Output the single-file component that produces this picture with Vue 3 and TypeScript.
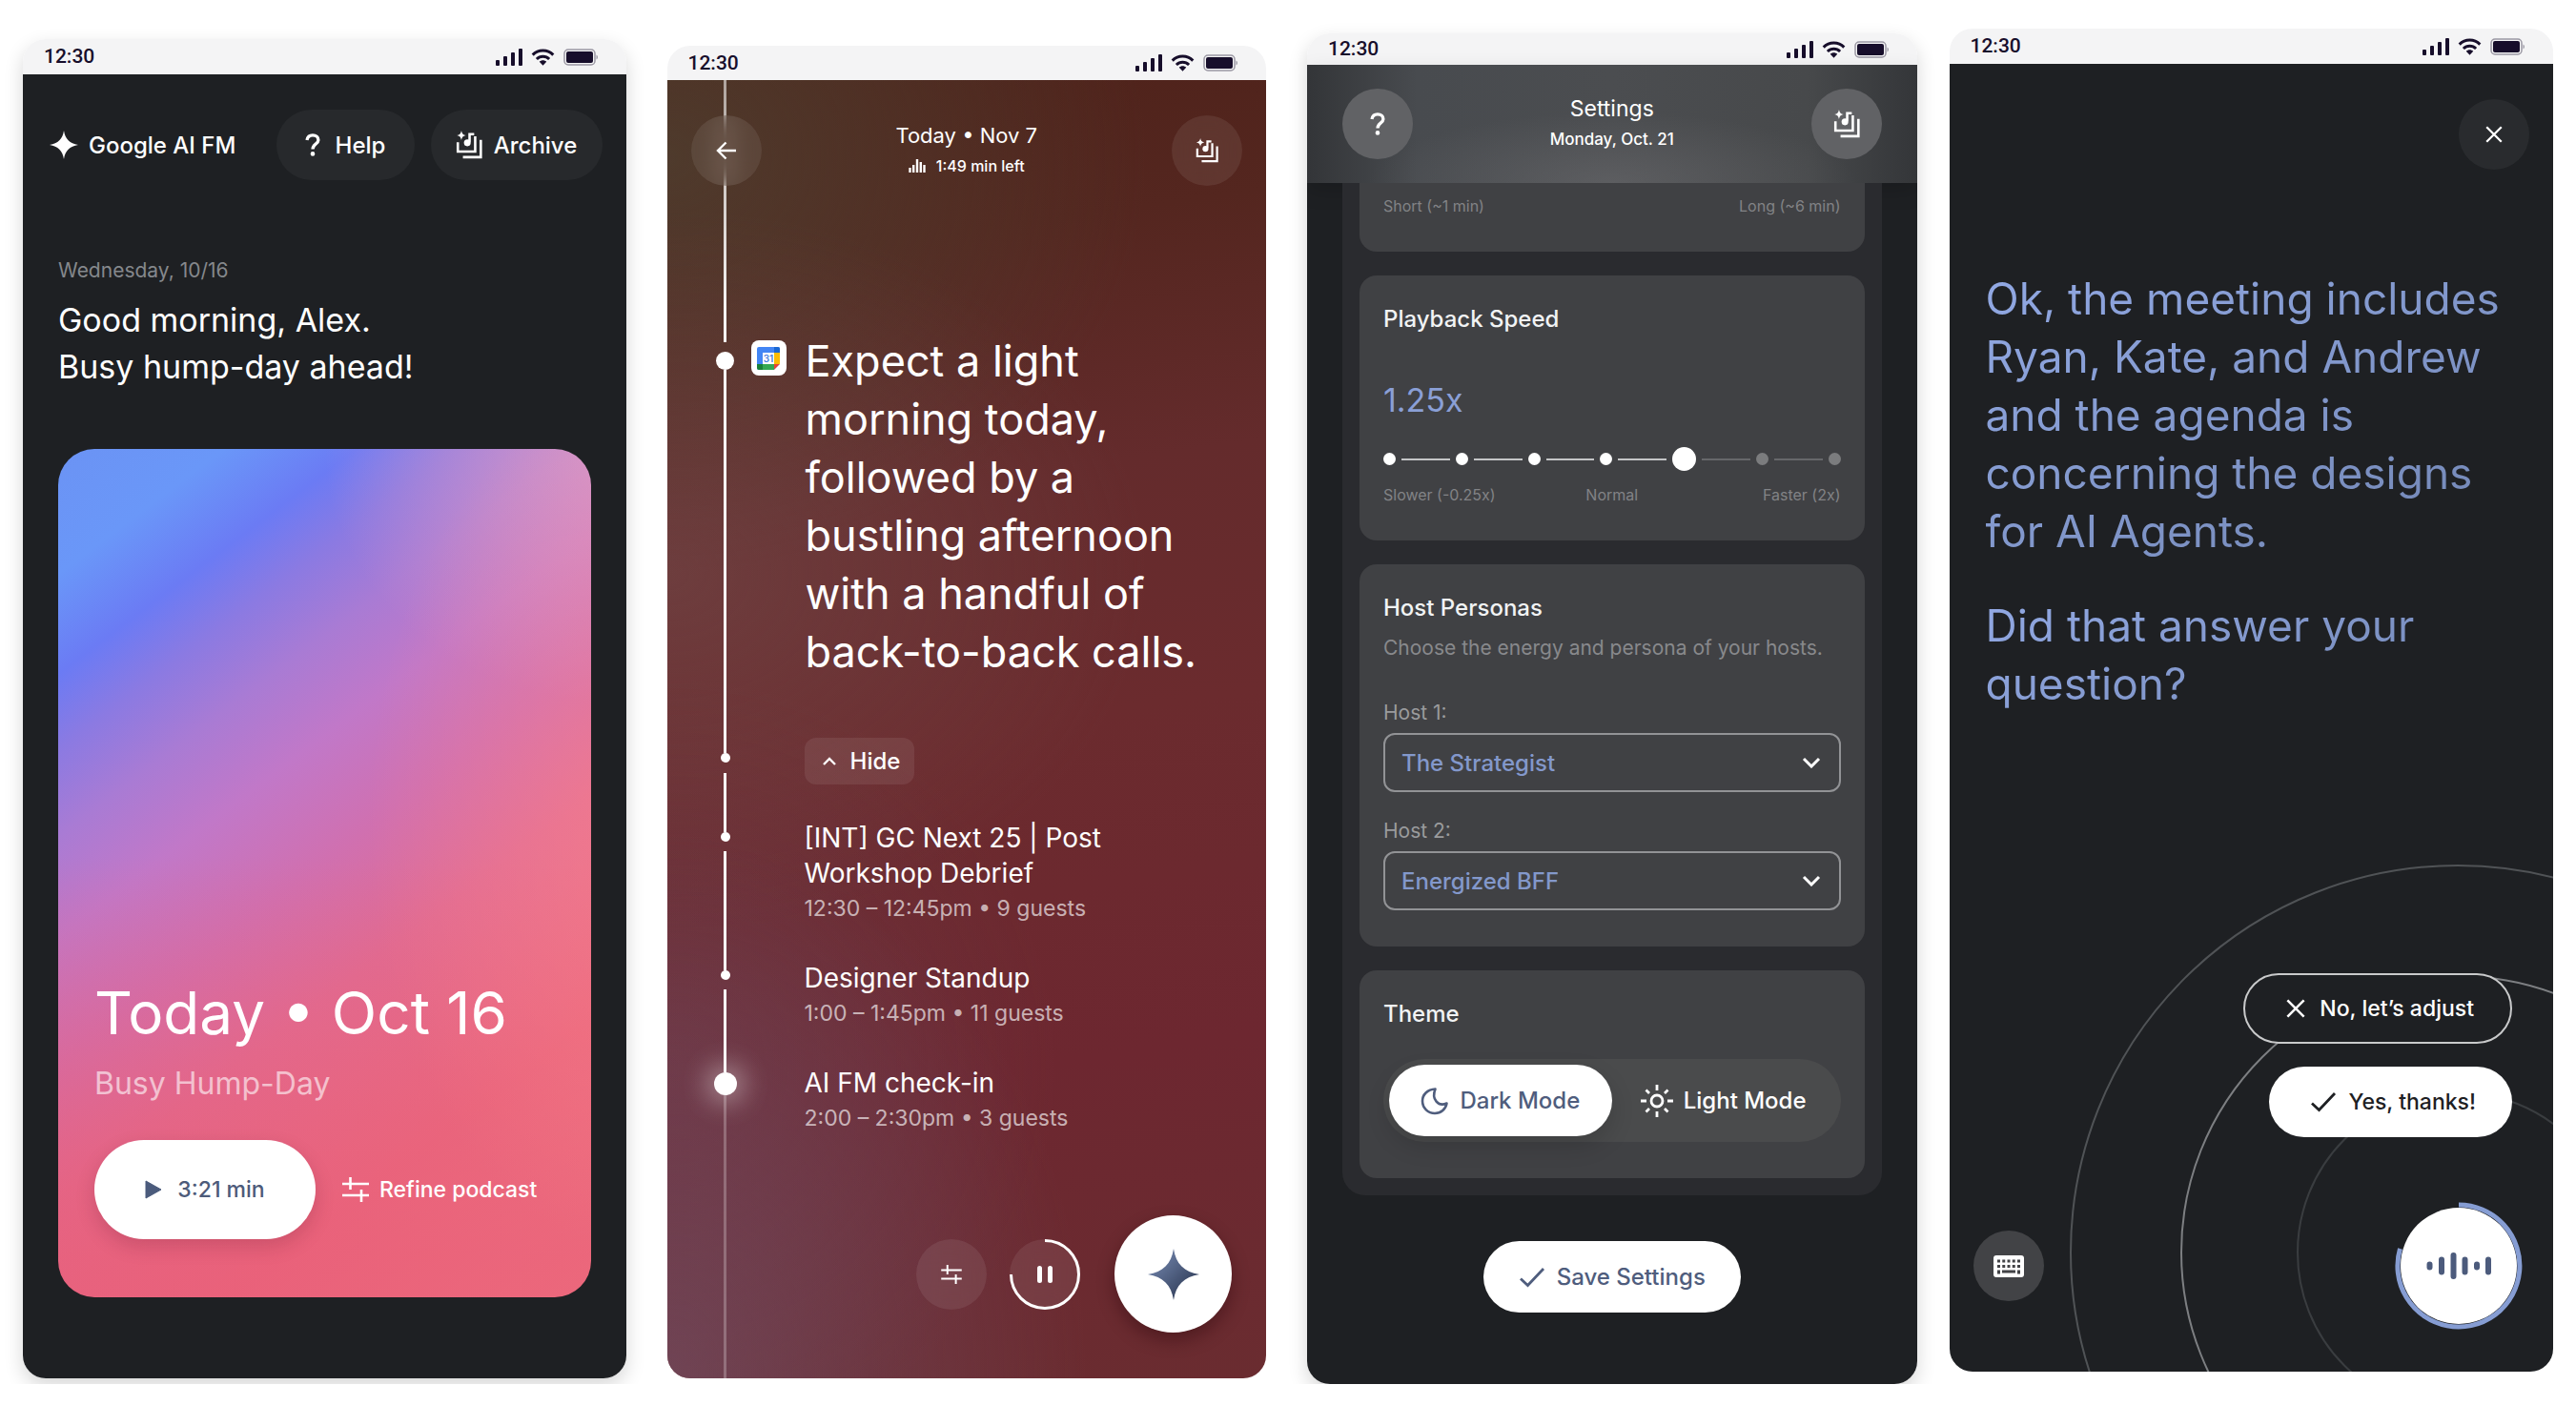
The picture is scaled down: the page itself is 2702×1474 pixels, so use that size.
<script setup lang="ts">
import { ref } from 'vue'

interface CalendarEvent {
  title: string[]
  meta: string
}

const summary: string[] = [
  'Expect a light',
  'morning today,',
  'followed by a',
  'bustling afternoon',
  'with a handful of',
  'back-to-back calls.',
]

const events: CalendarEvent[] = [
  { title: ['[INT] GC Next 25 | Post', 'Workshop Debrief'], meta: '12:30 – 12:45pm • 9 guests' },
  { title: ['Designer Standup'], meta: '1:00 – 1:45pm • 11 guests' },
  { title: ['AI FM check-in'], meta: '2:00 – 2:30pm • 3 guests' },
]

const answer: string[][] = [
  [
    'Ok, the meeting includes',
    'Ryan, Kate, and Andrew',
    'and the agenda is',
    'concerning the designs',
    'for AI Agents.',
  ],
  ['Did that answer your', 'question?'],
]

const speedSteps: number[] = [0, 1, 2, 3, 4, 5, 6]
const speedLabels: string[] = ['0.25x', '0.5x', '0.75x', '1x', '1.25x', '1.5x', '2x']
const speed = ref(4)

const personas: string[] = ['The Strategist', 'Energized BFF']
const hostOne = ref('The Strategist')
const hostTwo = ref('Energized BFF')
const theme = ref<'dark' | 'light'>('dark')
</script>

<template>
  <svg class="sprite" aria-hidden="true">
    <symbol id="i-signal" viewBox="0 0 28 18">
      <rect x="0" y="12" width="4" height="6" rx="1" />
      <rect x="8" y="8" width="4" height="10" rx="1" />
      <rect x="16" y="4" width="4" height="14" rx="1" />
      <rect x="24" y="0" width="4" height="18" rx="1" />
    </symbol>
    <symbol id="i-wifi" viewBox="0 0 24 18">
      <g fill="none" stroke="currentColor" stroke-width="3">
        <path d="M1.200 6.600C7.200 .4 16.800 .4 22.800 6.600" />
        <path d="M5.400 11C9.200 7.200 14.800 7.200 18.600 11" />
      </g>
      <path d="M8.300 13.700C10.400 11.700 13.600 11.700 15.700 13.700L12 17.800Z" />
    </symbol>
    <symbol id="i-battery" viewBox="0 0 37 18">
      <rect x="1" y="1" width="32" height="16" rx="4" fill="none" stroke="currentColor" stroke-width="1.5" opacity=".4" />
      <rect x="3" y="3" width="28" height="12" rx="2" />
      <path d="M34.500 6.500C36.500 7.500 36.500 10.500 34.500 11.500Z" opacity=".4" />
    </symbol>
    <symbol id="i-star" viewBox="0 0 32 32">
      <path d="M16 0C17.500 9.500 22.500 14.500 32 16C22.500 17.500 17.500 22.500 16 32C14.500 22.500 9.500 17.500 0 16C9.500 14.500 14.500 9.500 16 0Z" />
    </symbol>
    <symbol id="i-archive" viewBox="0 0 26 28">
      <path d="M5.500 0C6.100 3 7 4 10 4.700C7 5.400 6.100 6.400 5.500 9.400C4.900 6.400 4 5.400 1 4.700C4 4 4.900 3 5.500 0Z" />
      <g fill="none" stroke="currentColor" stroke-width="2.400">
        <path d="M2 11.500V20.500H19V5.500" />
        <path d="M7 26H24.500V9" />
        <path d="M13.500 11V3.500H18" />
      </g>
      <circle cx="11.300" cy="12" r="3.300" />
    </symbol>
    <symbol id="i-help" viewBox="0 0 16 24">
      <path d="M2 7C2.600 3.600 5 1.900 8 1.900C11.600 1.900 13.900 4 13.900 7C13.900 11 8 11.300 8 16.500" fill="none" stroke="currentColor" stroke-width="3.300" />
      <circle cx="8" cy="21.400" r="2.300" />
    </symbol>
    <symbol id="i-tune" viewBox="0 0 28 26">
      <path d="M0 7H28M8.500 0V13M0 19H28M20 13V26" fill="none" stroke="currentColor" stroke-width="2.600" />
    </symbol>
    <symbol id="i-check" viewBox="0 0 28 22">
      <path d="M2 12.500L9.500 19.500L26 2" fill="none" stroke="currentColor" stroke-width="2.800" />
    </symbol>
    <symbol id="i-cross" viewBox="0 0 22 22">
      <path d="M1.500 1.500L20.500 20.500M20.500 1.500L1.500 20.500" fill="none" stroke="currentColor" stroke-width="2.800" />
    </symbol>
  </svg>

  <main class="board">
    <!-- Home -->
    <section class="phone phone-home">
      <div class="status">
        <span>12:30</span>
        <div class="status-icons">
          <svg width="28" height="18"><use href="#i-signal" /></svg>
          <svg width="25" height="18"><use href="#i-wifi" /></svg>
          <svg width="37" height="18"><use href="#i-battery" /></svg>
        </div>
      </div>
      <div class="screen home">
        <header class="home-bar">
          <div class="brand">
            <svg width="30" height="32"><use href="#i-star" /></svg>
            <span>Google AI FM</span>
          </div>
          <button class="chip chip-help" type="button">
            <svg width="16" height="24"><use href="#i-help" /></svg>
            <span>Help</span>
          </button>
          <button class="chip chip-archive" type="button">
            <svg width="28" height="30"><use href="#i-archive" /></svg>
            <span>Archive</span>
          </button>
        </header>
        <p class="date">Wednesday, 10/16</p>
        <h1 class="greeting">Good morning, Alex.<br />Busy hump-day ahead!</h1>
        <article class="card">
          <h2>Today • Oct 16</h2>
          <p>Busy Hump-Day</p>
          <div class="card-actions">
            <button class="play" type="button">
              <svg width="18" height="20" viewBox="0 0 18 20"><path d="M1 1V19L17 10Z" fill="#4b5b7c" stroke="#4b5b7c" stroke-linejoin="round" /></svg>
              <span>3:21 min</span>
            </button>
            <button class="refine" type="button">
              <svg width="28" height="26"><use href="#i-tune" /></svg>
              <span>Refine podcast</span>
            </button>
          </div>
        </article>
      </div>
    </section>

    <!-- Player -->
    <section class="phone phone-player">
      <div class="status">
        <span>12:30</span>
        <div class="status-icons">
          <svg width="28" height="18"><use href="#i-signal" /></svg>
          <svg width="25" height="18"><use href="#i-wifi" /></svg>
          <svg width="37" height="18"><use href="#i-battery" /></svg>
        </div>
      </div>
      <div class="screen player">
        <div class="rail" aria-hidden="true">
          <i class="seg seg-lead"></i>
          <i class="dot dot-mid"></i>
          <i class="seg seg-long"></i>
          <i class="dot"></i>
          <i class="seg seg-a"></i>
          <i class="dot"></i>
          <i class="seg seg-b"></i>
          <i class="dot"></i>
          <i class="seg seg-c"></i>
          <i class="dot dot-now"></i>
          <i class="seg seg-rest"></i>
        </div>
        <header class="player-bar">
          <button class="round glass" type="button" aria-label="Back">
            <svg width="22" height="20" viewBox="0 0 22 20"><path d="M21 10H2M10.500 1.500L2 10L10.500 18.500" fill="none" stroke="currentColor" stroke-width="2.400" /></svg>
          </button>
          <div class="bar-title">
            <h2>Today • Nov 7</h2>
            <p>
              <svg width="18" height="14" viewBox="0 0 18 14"><path d="M1.500 14V9M5.200 14V6M9 14V0M12.800 14V3M16.500 14V6" fill="none" stroke="currentColor" stroke-width="2.400" /></svg>
              <span>1:49 min left</span>
            </p>
          </div>
          <button class="round glass" type="button" aria-label="Archive">
            <svg width="24" height="26"><use href="#i-archive" /></svg>
          </button>
        </header>
        <div class="summary">
          <div class="calendar">
            <svg width="24" height="24" viewBox="0 0 24 24">
              <rect width="24" height="24" rx="2" fill="#4285f4" />
              <path d="M18 0H22A2 2 0 0 1 24 2V6H18Z" fill="#1967d2" />
              <path d="M18 6H24V18H18Z" fill="#fbbc04" />
              <path d="M6 18H18V24H6Z" fill="#34a853" />
              <path d="M0 18H6V24H2A2 2 0 0 1 0 22Z" fill="#188038" />
              <path d="M18 18H24L18 24Z" fill="#ea4335" />
              <path d="M24 18V24H18Z" fill="#fff" />
              <rect x="6" y="6" width="12" height="12" fill="#fff" />
              <text x="12" y="16" text-anchor="middle" font-size="10" font-weight="600" fill="#4a7fe0">31</text>
            </svg>
          </div>
          <p class="statement">
            <span v-for="line in summary" :key="line">{{ line }}</span>
          </p>
        </div>
        <div class="agenda">
          <button class="hide" type="button">
            <svg width="14" height="9" viewBox="0 0 14 9"><path d="M1 8L7 2L13 8" fill="none" stroke="currentColor" stroke-width="2.400" /></svg>
            <span>Hide</span>
          </button>
          <ul>
            <li v-for="event in events" :key="event.meta">
              <h3><span v-for="line in event.title" :key="line">{{ line }}</span></h3>
              <p>{{ event.meta }}</p>
            </li>
          </ul>
        </div>
        <footer class="player-controls">
          <button class="round glass" type="button" aria-label="Refine">
            <svg width="24" height="20"><use href="#i-tune" /></svg>
          </button>
          <button class="round glass pause" type="button" aria-label="Pause">
            <svg width="74" height="74" viewBox="0 0 74 74">
              <path d="M37 1.500A35.500 35.500 0 1 1 1.500 37" fill="none" stroke="#fff" stroke-width="3" />
              <path d="M31.500 30.500V43.500M42.500 30.500V43.500" stroke="#fff" stroke-width="5" stroke-linecap="round" />
            </svg>
          </button>
          <button class="ask" type="button" aria-label="Ask">
            <svg width="54" height="54" viewBox="0 0 32 32">
              <defs>
                <linearGradient id="ink" x1="0" y1="0" x2="1" y2="1">
                  <stop offset="0.200" stop-color="#6b7da3" />
                  <stop offset="0.800" stop-color="#33405c" />
                </linearGradient>
              </defs>
              <path fill="url(#ink)" d="M16 0C17.500 9.500 22.500 14.500 32 16C22.500 17.500 17.500 22.500 16 32C14.500 22.500 9.500 17.500 0 16C9.500 14.500 14.500 9.500 16 0Z" />
            </svg>
          </button>
        </footer>
      </div>
    </section>

    <!-- Settings -->
    <section class="phone phone-settings">
      <div class="status">
        <span>12:30</span>
        <div class="status-icons">
          <svg width="28" height="18"><use href="#i-signal" /></svg>
          <svg width="25" height="18"><use href="#i-wifi" /></svg>
          <svg width="37" height="18"><use href="#i-battery" /></svg>
        </div>
      </div>
      <div class="screen settings">
        <header class="settings-bar">
          <button class="round frosted" type="button" aria-label="Help">
            <svg width="16" height="24"><use href="#i-help" /></svg>
          </button>
          <div class="bar-title">
            <h2>Settings</h2>
            <p>Monday, Oct. 21</p>
          </div>
          <button class="round frosted" type="button" aria-label="Archive">
            <svg width="28" height="30"><use href="#i-archive" /></svg>
          </button>
        </header>
        <form class="panel" @submit.prevent>
          <div class="tile tile-length">
            <div class="range-labels"><span>Short (~1 min)</span><span></span><span>Long (~6 min)</span></div>
          </div>
          <div class="tile">
            <h3><label for="speed">Playback Speed</label></h3>
            <output class="speed" for="speed">{{ speedLabels[speed] }}</output>
            <div class="slider">
              <template v-for="step in speedSteps" :key="step">
                <i v-if="step > 0" class="track" :class="{ off: step > speed }"></i>
                <i class="stop" :class="{ off: step > speed, thumb: step === speed }"></i>
              </template>
              <input id="speed" v-model.number="speed" type="range" min="0" max="6" step="1" />
            </div>
            <div class="range-labels"><span>Slower (-0.25x)</span><span>Normal</span><span>Faster (2x)</span></div>
          </div>
          <div class="tile">
            <h3>Host Personas</h3>
            <p class="hint">Choose the energy and persona of your hosts.</p>
            <div class="field">
              <label for="host-1">Host 1:</label>
              <div class="select">
                <select id="host-1" v-model="hostOne">
                  <option v-for="p in personas" :key="p">{{ p }}</option>
                </select>
                <svg width="20" height="12" viewBox="0 0 20 12"><path d="M2 2L10 10L18 2" fill="none" stroke="#fff" stroke-width="3" /></svg>
              </div>
            </div>
            <div class="field">
              <label for="host-2">Host 2:</label>
              <div class="select">
                <select id="host-2" v-model="hostTwo">
                  <option v-for="p in personas" :key="p">{{ p }}</option>
                </select>
                <svg width="20" height="12" viewBox="0 0 20 12"><path d="M2 2L10 10L18 2" fill="none" stroke="#fff" stroke-width="3" /></svg>
              </div>
            </div>
          </div>
          <div class="tile">
            <h3>Theme</h3>
            <div class="toggle">
              <label :class="{ active: theme === 'dark' }">
                <input v-model="theme" type="radio" name="theme" value="dark" />
                <svg width="30" height="30" viewBox="0 0 30 30"><path d="M15.500 2.500C7 3 2 8.500 2 15C2 22.500 8 28 15 28C21.500 28 26.500 23.500 27.500 17.500C19 21.500 11 13.500 15.500 2.500Z" fill="none" stroke="currentColor" stroke-width="2.600" stroke-linejoin="round" /></svg>
                <span>Dark Mode</span>
              </label>
              <label :class="{ active: theme === 'light' }">
                <input v-model="theme" type="radio" name="theme" value="light" />
                <svg width="34" height="34" viewBox="0 0 34 34">
                  <g fill="none" stroke="currentColor" stroke-width="2.800">
                    <circle cx="17" cy="17" r="6" />
                    <path d="M17 0V6M17 28V34M0 17H6M28 17H34M5.500 5.500L9 9M25 25L28.500 28.500M28.500 5.500L25 9M9 25L5.500 28.500" />
                  </g>
                </svg>
                <span>Light Mode</span>
              </label>
            </div>
          </div>
        </form>
        <button class="save" type="button">
          <svg width="28" height="22"><use href="#i-check" /></svg>
          <span>Save Settings</span>
        </button>
      </div>
    </section>

    <!-- Voice -->
    <section class="phone phone-voice">
      <div class="status">
        <span>12:30</span>
        <div class="status-icons">
          <svg width="28" height="18"><use href="#i-signal" /></svg>
          <svg width="25" height="18"><use href="#i-wifi" /></svg>
          <svg width="37" height="18"><use href="#i-battery" /></svg>
        </div>
      </div>
      <div class="screen voice">
        <svg class="rings" width="816" height="816" viewBox="0 0 816 816" aria-hidden="true">
          <g fill="none" stroke-width="2">
            <circle cx="408" cy="408" r="406" stroke="#505356" />
            <circle cx="408" cy="408" r="290" stroke="#7d7f82" />
            <circle cx="408" cy="408" r="168" stroke="#3a3d40" />
          </g>
        </svg>
        <header class="voice-bar">
          <button class="round dim" type="button" aria-label="Close">
            <svg width="18" height="18"><use href="#i-cross" /></svg>
          </button>
        </header>
        <div class="answer">
          <p v-for="(paragraph, i) in answer" :key="i">
            <span v-for="line in paragraph" :key="line">{{ line }}</span>
          </p>
        </div>
        <div class="replies">
          <button class="reply reply-no" type="button">
            <svg width="20" height="20"><use href="#i-cross" /></svg>
            <span>No, let’s adjust</span>
          </button>
          <button class="reply reply-yes" type="button">
            <svg width="28" height="22"><use href="#i-check" /></svg>
            <span>Yes, thanks!</span>
          </button>
        </div>
        <footer class="voice-controls">
          <button class="round keyboard" type="button" aria-label="Keyboard">
            <svg width="32" height="23" viewBox="0 0 32 23">
              <rect width="32" height="23" rx="3" fill="#fff" />
              <path d="M4 6H28M4 11.500H28" stroke="#424346" stroke-width="3" stroke-dasharray="3 2.250" />
              <path d="M4 17.500H7M25 17.500H28" stroke="#424346" stroke-width="4" />
              <path d="M9 17H23" stroke="#424346" stroke-width="3" />
            </svg>
          </button>
          <button class="mic" type="button" aria-label="Listening">
            <svg width="134" height="134" viewBox="0 0 134 134">
              <circle cx="67" cy="67" r="61" fill="#fff" />
              <path d="M67 3A64 64 0 1 1 5.500 49" fill="none" stroke="#869dd3" stroke-width="5" />
              <path d="M36.500 65.500V68.500M49 60.500V73.500M61.500 56V78M73.500 60.500V73.500M86 65.500V68.500M98 60.500V73.500" stroke="#4c5b7c" stroke-width="6" stroke-linecap="round" />
            </svg>
          </button>
        </footer>
      </div>
    </section>
  </main>
</template>

<style>
body {
  margin: 0;
  background: #fff;
}
</style>

<style scoped>
.sprite {
  position: absolute;
  width: 0;
  height: 0;
}
.board {
  display: flex;
  align-items: flex-start;
  padding: 0 24px;
  font-family: Inter, "Open Sans", sans-serif;
  color: #fff;
}
.board svg {
  display: block;
  flex: none;
  fill: currentColor;
}
h1, h2, h3, p, ul {
  margin: 0;
  padding: 0;
  font-weight: 400;
  list-style: none;
}
button {
  margin: 0;
  padding: 0;
  border: 0;
  background: none;
  color: inherit;
  font: inherit;
  font-weight: 500;
  font-size: 24px;
  display: flex;
  align-items: center;
  justify-content: center;
  box-sizing: border-box;
}

/* Phone shell */
.phone {
  min-width: 0;
  border-radius: 24px;
  overflow: hidden;
  display: flex;
  flex-direction: column;
}
.phone-home {
  flex: 633 1 0;
  margin-top: 41px;
  box-shadow: 0 8px 20px rgba(0, 0, 0, 0.16);
}
.phone-player {
  flex: 629 1 0;
  margin: 48px 0 0 43px;
}
.phone-settings {
  flex: 640 1 0;
  margin: 35px 0 0 43px;
  box-shadow: 0 8px 20px rgba(0, 0, 0, 0.16);
}
.phone-voice {
  flex: 634 1 0;
  margin: 30px 0 0 34px;
}
.status {
  display: flex;
  align-items: center;
  justify-content: space-between;
  height: 37px;
  padding: 0 29px 0 22px;
  background: #f4f4f5;
  color: #170e2b;
  font: 500 21px/37px Roboto, sans-serif;
}
.phone-player .status {
  height: 36px;
}
.phone-settings .status {
  height: 33px;
}
.status-icons {
  display: flex;
  gap: 9px;
}
.screen {
  position: relative;
  background: #1e2023;
}
.round {
  width: 74px;
  height: 74px;
  border-radius: 50%;
  flex: none;
}
.bar-title {
  text-align: center;
}
.bar-title h2 {
  font-size: 22px;
  line-height: 32px;
}
.bar-title p {
  display: flex;
  align-items: center;
  justify-content: center;
  gap: 11px;
  font-size: 16px;
  line-height: 32px;
  font-weight: 500;
}

/* Home */
.home {
  padding: 37px 25px 85px 28px;
}
.home-bar {
  display: flex;
  align-items: center;
  gap: 17px;
}
.brand {
  display: flex;
  align-items: center;
  gap: 11px;
  margin-right: auto;
  font-size: 24px;
  font-weight: 500;
  white-space: nowrap;
}
.chip {
  height: 74px;
  border-radius: 37px;
  background: #27292c;
  gap: 16px;
}
.chip-help {
  width: 145px;
}
.chip-archive {
  width: 180px;
  gap: 12px;
}
.date {
  margin: 82px 0 0 9px;
  color: #85888c;
  font-size: 21px;
  line-height: 26px;
}
.greeting {
  margin: 14px 0 0 9px;
  font-size: 34px;
  line-height: 49px;
}
.card {
  margin: 62px 12px 0 9px;
  aspect-ratio: 558 / 889;
  box-sizing: border-box;
  padding: 0 38px 61px;
  border-radius: 38px;
  display: flex;
  flex-direction: column;
  justify-content: flex-end;
  background:
    radial-gradient(ellipse 50% 50% at 108% 44%, rgba(255, 135, 140, 0.5), rgba(255, 135, 140, 0)),
    radial-gradient(ellipse 55% 30% at 105% 0%, rgba(230, 160, 195, 0.75), rgba(230, 160, 195, 0)),
    linear-gradient(180deg, rgba(233, 94, 120, 0) 48%, rgba(233, 94, 120, 0.7) 95%),
    linear-gradient(143deg, #6b93f4 0%, #6a97f8 10%, #6b7bf4 18%, #8b7ae2 24%, #a97bd4 31%, #c178c8 39%, #d070b0 49%, #e06c94 60%, #ea6a80 78%, #f27f84 100%);
}
.card h2 {
  font-size: 62px;
  line-height: 80px;
  white-space: nowrap;
}
.card p {
  margin-top: 14px;
  font-size: 32px;
  line-height: 40px;
  color: rgba(255, 255, 255, 0.6);
}
.card-actions {
  display: flex;
  align-items: center;
  gap: 28px;
  margin-top: 39px;
  white-space: nowrap;
}
.card-actions button {
  font-size: 23px;
}
.play {
  width: 232px;
  height: 104px;
  flex: none;
  border-radius: 52px;
  background: #fff;
  color: #4d5b7a;
  gap: 16px;
  box-shadow: 0 8px 20px rgba(90, 20, 40, 0.2);
}
.refine {
  gap: 11px;
}

/* Player */
.player {
  padding: 37px 25px 48px;
  background:
    radial-gradient(ellipse 70% 42% at 0% 100%, rgba(114, 80, 102, 0.65), rgba(114, 80, 102, 0)),
    radial-gradient(ellipse 65% 30% at 0% 76%, rgba(110, 72, 92, 0.35), rgba(110, 72, 92, 0)),
    radial-gradient(ellipse 80% 28% at 0% 38%, rgba(116, 76, 76, 0.55), rgba(116, 76, 76, 0)),
    radial-gradient(ellipse 80% 32% at 0% 6%, rgba(78, 64, 48, 0.8), rgba(78, 64, 48, 0)),
    linear-gradient(172deg, #4e221a 0%, #54261f 14%, #642b2c 32%, #6b2b2e 50%, #6d2730 75%, #6a2c30 100%);
}
.rail {
  position: absolute;
  top: 0;
  bottom: 0;
  left: 49px;
  width: 24px;
  display: flex;
  flex-direction: column;
  align-items: center;
}
.seg {
  width: 3px;
  background: #fff;
}
.seg-lead {
  height: 275px;
  margin-bottom: 10px;
  background: linear-gradient(rgba(255, 255, 255, 0.55), #fff);
}
.seg-long {
  height: 402px;
}
.seg-a {
  height: 62px;
  margin-top: 11px;
}
.seg-b {
  height: 125px;
  margin-top: 10px;
}
.seg-c {
  height: 87px;
  margin-top: 10px;
}
.seg-rest {
  flex: 1;
  background: rgba(255, 255, 255, 0.25);
}
.dot {
  width: 10px;
  height: 10px;
  border-radius: 50%;
  background: #fff;
}
.dot-mid {
  width: 19px;
  height: 19px;
}
.dot-now {
  width: 24px;
  height: 24px;
  box-shadow: 0 0 28px 8px rgba(255, 255, 255, 0.4);
}
.player-bar {
  position: relative;
  display: flex;
  align-items: center;
  justify-content: space-between;
}
.glass {
  background: rgba(255, 255, 255, 0.08);
  backdrop-filter: blur(12px);
}
.summary {
  display: flex;
  align-items: flex-start;
  gap: 20px;
  margin-top: 153px;
  padding-left: 63px;
}
.calendar {
  display: flex;
  align-items: center;
  justify-content: center;
  width: 37px;
  height: 37px;
  margin-top: 9px;
  border-radius: 8px;
  background: #fff;
}
.statement {
  font-size: 45px;
  line-height: 61px;
  white-space: nowrap;
}
.statement span,
.agenda h3 span,
.answer span {
  display: block;
}
.agenda {
  margin-top: 60px;
  padding-left: 119px;
}
.hide {
  width: 115px;
  height: 49px;
  padding-left: 5px;
  border-radius: 12px;
  background: rgba(255, 255, 255, 0.08);
  gap: 15px;
}
.agenda ul {
  display: flex;
  flex-direction: column;
  gap: 36px;
  margin-top: 38px;
}
.agenda h3 {
  font-size: 28px;
  line-height: 37px;
}
.agenda li p {
  font-size: 23px;
  line-height: 37px;
  color: rgba(255, 255, 255, 0.65);
}
.player-controls {
  display: flex;
  align-items: center;
  justify-content: flex-end;
  gap: 24px;
  margin-top: 83px;
  padding-right: 11px;
}
.ask {
  width: 123px;
  height: 123px;
  margin-left: 12px;
  border-radius: 50%;
  background: #fff;
  box-shadow: 0 8px 18px rgba(40, 5, 10, 0.4);
}

/* Settings */
.settings {
  padding-bottom: 75px;
}
.settings-bar {
  display: flex;
  align-items: center;
  justify-content: space-between;
  padding: 25px 37px;
  background:
    radial-gradient(ellipse 40% 60% at 50% 100%, rgba(110, 110, 113, 0.5), rgba(110, 110, 113, 0)),
    linear-gradient(90deg, #333538 0%, #484b4f 18%, #4b4d50 50%, #47494b 82%, #343639 100%);
  box-shadow: 0 8px 20px rgba(0, 0, 0, 0.15);
}
.settings-bar .bar-title h2 {
  font-size: 23px;
}
.settings-bar .bar-title p {
  font-size: 17px;
}
.frosted {
  background: #616265;
}
.panel {
  margin: 0 37px;
  padding: 0 18px;
  padding-bottom: 18px;
  border-radius: 0 0 24px 24px;
  background: #2a2b2f;
  display: flex;
  flex-direction: column;
  gap: 25px;
}
.tile {
  padding: 30px 25px 38px;
  border-radius: 18px;
  background: #404144;
}
.tile-length {
  padding-top: 14px;
  border-radius: 0 0 18px 18px;
}
.tile h3 {
  color: #f1f3f4;
  font-size: 24px;
  line-height: 32px;
  font-weight: 500;
}
.range-labels {
  display: grid;
  grid-template-columns: 1fr auto 1fr;
  color: #828386;
  font-size: 16px;
  line-height: 20px;
}
.range-labels span:last-child {
  text-align: right;
}
.speed {
  display: block;
  margin-top: 47px;
  color: #8a9fd6;
  font-size: 34px;
  line-height: 44px;
}
.slider {
  position: relative;
  display: flex;
  align-items: center;
  gap: 6px;
  margin: 27px 0 15px;
}
.slider input {
  position: absolute;
  inset: 0;
  width: 100%;
  margin: 0;
  opacity: 0;
}
.stop {
  width: 13px;
  height: 13px;
  border-radius: 50%;
  background: #fff;
}
.stop.thumb {
  width: 25px;
  height: 25px;
}
.track {
  flex: 1;
  height: 2px;
  background: #c4c5c6;
}
.stop.off {
  background: #7b7c7e;
}
.track.off {
  background: #66676a;
}
.hint {
  margin: 12px 0 40px;
  color: #88898c;
  font-size: 21px;
  line-height: 28px;
  white-space: nowrap;
}
.field label {
  display: block;
  color: #9a9b9d;
  font-size: 21px;
  line-height: 28px;
}
.field + .field {
  margin-top: 27px;
}
.select {
  position: relative;
  margin-top: 7px;
}
.select select {
  appearance: none;
  display: block;
  width: 100%;
  height: 62px;
  margin: 0;
  padding: 0 17px;
  border: 2px solid #929396;
  border-radius: 12px;
  background: none;
  color: #8398cb;
  font: inherit;
  font-size: 24px;
  font-weight: 500;
}
.select svg {
  position: absolute;
  top: 25px;
  right: 21px;
  pointer-events: none;
}
.toggle {
  display: flex;
  margin-top: 31px;
  padding: 6px;
  border-radius: 44px;
  background: #4a4b4c;
}
.toggle label {
  flex: 1;
  display: flex;
  align-items: center;
  justify-content: center;
  gap: 11px;
  height: 75px;
  border-radius: 38px;
  font-size: 24px;
  font-weight: 500;
}
.toggle label.active {
  background: #fff;
  color: #4f5d7d;
  box-shadow: 0 10px 24px rgba(0, 0, 0, 0.15);
}
.toggle input {
  position: absolute;
  margin: 0;
  opacity: 0;
}
.save {
  width: 270px;
  height: 75px;
  margin: 48px auto 0;
  border-radius: 38px;
  background: #fff;
  color: #4f5d7d;
  gap: 12px;
}

/* Voice */
.voice {
  overflow: hidden;
  padding: 37px 25px 44px;
}
.rings {
  position: absolute;
  right: -308px;
  bottom: -283px;
}
.voice-bar {
  display: flex;
  justify-content: flex-end;
}
.dim {
  background: #292b2e;
}
.answer {
  display: flex;
  flex-direction: column;
  gap: 38px;
  margin: 105px 0 0 13px;
}
.answer p {
  font-size: 46px;
  line-height: 61px;
  white-space: nowrap;
  background: linear-gradient(150deg, #92a9e4, #7185b2);
  background-clip: text;
  color: transparent;
}
.replies {
  position: relative;
  display: flex;
  flex-direction: column;
  align-items: flex-end;
  gap: 24px;
  margin: 273px 18px 0 0;
}
.reply {
  height: 74px;
  padding: 0 38px 0 43px;
  border-radius: 37px;
  font-size: 23px;
  gap: 15px;
}
.reply-no {
  border: 2px solid #c9cacb;
  background: #1e2023;
}
.reply-yes {
  gap: 12px;
  background: #fff;
  color: #1e2023;
}
.voice-controls {
  position: relative;
  display: flex;
  align-items: center;
  justify-content: space-between;
  margin-top: 68px;
  padding-right: 7px;
}
.keyboard {
  background: #424346;
}
</style>
